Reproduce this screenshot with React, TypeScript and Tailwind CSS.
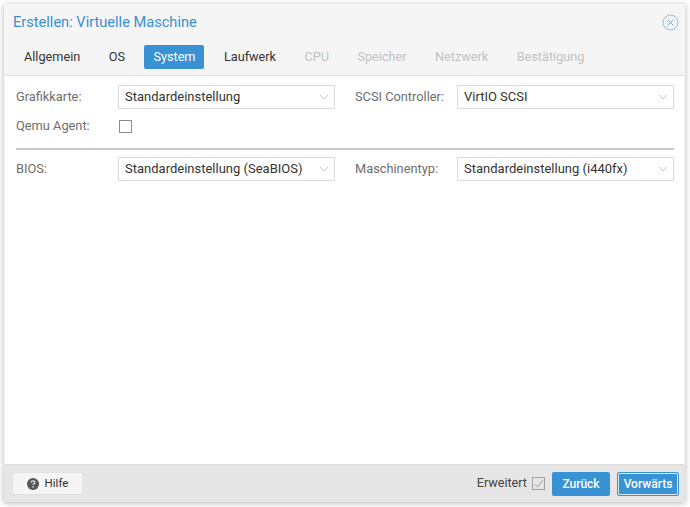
const font = { fontFamily: 'Roboto, "Liberation Sans", Arial, sans-serif' };

function Chevron() {
  return (
    <svg width="10" height="6" viewBox="0 0 10 6" className="shrink-0">
      <path d="M1 1l4 4 4-4" fill="none" stroke="#c4c4c4" strokeWidth="1" />
    </svg>
  );
}

function Select({ value, className }: { value: string; className: string }) {
  return (
    <div className={`flex h-[24px] items-center justify-between border border-[#dcdcdc] bg-white pl-[6px] pr-[5px] text-[13px] text-[#333] ${className}`}>
      <span>{value}</span>
      <Chevron />
    </div>
  );
}

function Tab({ label, state }: { label: string; state?: 'active' | 'off' }) {
  const cls =
    state === 'active'
      ? 'bg-[#3892d4] text-white rounded-[2px]'
      : state === 'off'
        ? 'text-[#c2c2c2]'
        : 'text-[#333]';
  return <div className={`flex h-[24px] items-center px-[9px] text-[12.7px] ${cls}`}>{label}</div>;
}

export default function App() {
  return (
    <div className="h-[507px] w-[690px] overflow-hidden bg-white pl-[4px] pt-[4px]" style={font}>
      <div className="flex h-[498px] w-[681px] flex-col bg-[#f5f5f5] shadow-[0_1px_6px_rgba(0,0,0,0.3)]">
        <div className="flex h-[36px] items-center justify-between pl-[9px] pr-[6px]">
          <span className="pt-[1px] text-[14.6px] text-[#3b8fcf]">Erstellen: Virtuelle Maschine</span>
          <svg width="17" height="17" viewBox="0 0 17 17">
            <circle cx="8.5" cy="8.5" r="7.5" fill="none" stroke="#8dbde4" strokeWidth="1" />
            <path d="M5.5 5.5l6 6M11.5 5.5l-6 6" stroke="#7aa9d0" strokeWidth="1" />
          </svg>
        </div>
        <div className="flex h-[35px] gap-[10.45px] pl-[11px] pt-[5px]">
          <Tab label="Allgemein" />
          <Tab label="OS" />
          <Tab label="System" state="active" />
          <Tab label="Laufwerk" />
          <Tab label="CPU" state="off" />
          <Tab label="Speicher" state="off" />
          <Tab label="Netzwerk" state="off" />
          <Tab label="Bestätigung" state="off" />
        </div>
        <div className="ml-[1px] mr-[1px] h-[390px] border-y border-[#dcdcdc] bg-white pl-[11px] pt-[9px] text-[12.8px] text-[#6e6e6e]">
          <div className="flex h-[24px] items-center">
            <span className="w-[102px]">Grafikkarte:</span>
            <Select value="Standardeinstellung" className="w-[217px]" />
            <span className="ml-[20px] w-[102px]">SCSI Controller:</span>
            <Select value="VirtIO SCSI" className="w-[217px]" />
          </div>
          <div className="mt-[5px] flex h-[24px] items-center">
            <span className="w-[103px]">Qemu Agent:</span>
            <div className="h-[13px] w-[13px] border border-[#8a8a8a]" />
          </div>
          <div className="mt-[10px] mr-[10px] border-t-2 border-[#c8c8c8]" />
          <div className="mt-[7px] flex h-[24px] items-center">
            <span className="w-[102px]">BIOS:</span>
            <Select value="Standardeinstellung (SeaBIOS)" className="w-[217px]" />
            <span className="ml-[20px] w-[102px]">Maschinentyp:</span>
            <Select value="Standardeinstellung (i440fx)" className="w-[217px]" />
          </div>
        </div>
        <div className="flex flex-1 items-center justify-between bg-[#e6e6e6] pl-[8px] pr-[6px]">
          <div className="flex h-[23px] w-[71px] items-center justify-center gap-[6px] rounded-[2px] border border-[#e2e2e2] bg-[#f5f5f5] text-[11.5px] text-[#333]">
            <svg width="12" height="12" viewBox="0 0 12 12">
              <circle cx="6" cy="6" r="6" fill="#555" />
              <path d="M4.2 4.6c0-2.3 3.7-2.3 3.7-.1 0 1.3-1.9 1.3-1.9 2.6" fill="none" stroke="#e6e6e6" strokeWidth="1.3" />
              <rect x="5.3" y="8.2" width="1.4" height="1.4" fill="#e6e6e6" />
            </svg>
            <span>Hilfe</span>
          </div>
          <div className="flex items-center">
            <span className="text-[12.6px] text-[#444]">Erweitert</span>
            <svg width="13" height="13" viewBox="0 0 13 13" className="ml-[5px]">
              <rect x="0.5" y="0.5" width="12" height="12" fill="none" stroke="#a0a0a0" />
              <path d="M2.5 7l3 3 5.5-7" fill="none" stroke="#a0a0a0" strokeWidth="1" />
            </svg>
            <div className="ml-[7px] flex h-[24px] w-[58px] items-center justify-center rounded-[2px] bg-[#3892d4] text-[12px] font-medium text-white">
              Zurück
            </div>
            <div className="ml-[7px] flex h-[24px] w-[62px] items-center justify-center rounded-[2px] border border-[#3892d4] bg-[#3892d4] text-[12px] font-medium text-white shadow-[inset_0_0_0_1px_#dbe9f5]">
              Vorwärts
            </div>
          </div>
        </div>
      </div>
    </div>
  );
}
